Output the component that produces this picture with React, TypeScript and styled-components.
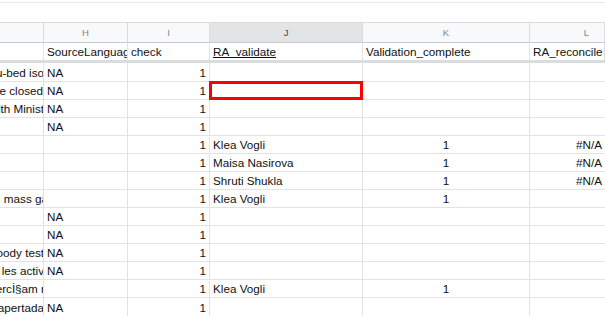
import React from "react"
import styled, { createGlobalStyle } from "styled-components"

const GlobalStyle = createGlobalStyle`
  html, body {
    margin: 0;
    padding: 0;
    background: #fff;
  }
  body {
    font-family: "Liberation Sans", Arial, sans-serif;
    overflow: hidden;
  }
`

const COLS = "44px 84px 82px 153px 167px 75px"

const Page = styled.div`
  width: 605px;
  height: 316px;
  overflow: hidden;
  background: #fff;
`

const TopBar = styled.div`
  height: 22px;
  box-sizing: border-box;
  padding-top: 2px;
  &::before {
    content: "";
    display: block;
    height: 1px;
    background: #e6e7e8;
  }
`

const Row = styled.div<{ $h: number }>`
  display: grid;
  grid-template-columns: ${COLS};
  height: ${(p) => p.$h}px;
`

const LetterCell = styled.div<{ $active?: boolean; $edge?: number }>`
  box-sizing: border-box;
  border-top: 1px solid #dadcdf;
  border-bottom: 1px solid #c8cacd;
  border-right: 1px solid #dadcdf;
  background: ${(p) => (p.$active ? "#e3e4e6" : "#f8f9fa")};
  color: ${(p) => (p.$active ? "#3c4043" : "#80868b")};
  font-size: 9.5px;
  display: flex;
  align-items: center;
  justify-content: ${(p) => (p.$edge ? "flex-end" : "center")};
  padding-right: ${(p) => p.$edge || 0}px;
`

const Freeze = styled.div`
  height: 3px;
  background: #dadce0;
`

const Cell = styled.div<{
  $align?: "left" | "right" | "center"
  $underline?: boolean
  $head?: boolean
  $selected?: boolean
}>`
  position: relative;
  box-sizing: border-box;
  border-right: 1px solid #e2e3e3;
  border-bottom: ${(p) => (p.$head ? "none" : "1px solid #e2e3e3")};
  font-size: 11.7px;
  color: #111;
  white-space: nowrap;
  overflow: hidden;
  display: flex;
  align-items: center;
  padding: 0 3px;
  justify-content: ${(p) =>
    p.$align === "right"
      ? "flex-end"
      : p.$align === "center"
      ? "center"
      : "flex-start"};
  text-decoration: ${(p) => (p.$underline ? "underline" : "none")};
  text-underline-offset: 1px;

  &:last-child {
    border-right: ${(p) => (p.$head ? "1px solid #dadcdf" : "none")};
  }

  ${(p) =>
    p.$selected &&
    `
    overflow: visible;
    &::after {
      content: "";
      position: absolute;
      left: -1px;
      top: -1px;
      right: -1px;
      bottom: -1px;
      border: 3px solid #ff0000;
      pointer-events: none;
    }
  `}
`

const Tail = styled.span<{ $over?: number }>`
  margin-right: ${(p) => -(p.$over || 0)}px;
`

const LeadCell = styled(Cell)`
  justify-content: flex-end;
  padding: 0;
`

type DataRow = {
  g?: string
  gOver?: number
  h?: string
  i?: string
  j?: string
  k?: string
  l?: string
  sel?: boolean
}

const rows: DataRow[] = [
  { g: "Covu-bed iso", gOver: 1, h: "NA", i: "1" },
  { g: "are closed", h: "NA", i: "1", sel: true },
  { g: "Health Minist", gOver: 1, h: "NA", i: "1" },
  { h: "NA", i: "1" },
  { i: "1", j: "Klea Vogli", k: "1", l: "#N/A" },
  { i: "1", j: "Maisa Nasirova", k: "1", l: "#N/A" },
  { i: "1", j: "Shruti Shukla", k: "1", l: "#N/A" },
  { g: " mass ga", gOver: 5, i: "1", j: "Klea Vogli", k: "1" },
  { h: "NA", i: "1" },
  { h: "NA", i: "1" },
  { g: "antioody test", gOver: 1, h: "NA", i: "1" },
  { g: "vities les activ", gOver: 1, h: "NA", i: "1" },
  { g: "Exercİ§am r", gOver: 2, i: "1", j: "Klea Vogli", k: "1" },
  { g: "está apertada", gOver: 1, h: "NA", i: "1" },
]

const heights = [19, 18, 18, 18, 18, 18, 18, 18, 18, 18, 18, 18, 18, 19]

export default function App() {
  return (
    <Page>
      <GlobalStyle />
      <TopBar />
      <Row $h={21}>
        <LetterCell />
        <LetterCell>H</LetterCell>
        <LetterCell>I</LetterCell>
        <LetterCell $active>J</LetterCell>
        <LetterCell>K</LetterCell>
        <LetterCell $edge={15}>L</LetterCell>
      </Row>
      <Row $h={17}>
        <Cell $head />
        <Cell $head>SourceLanguage</Cell>
        <Cell $head>check</Cell>
        <Cell $head $underline>
          RA_validate
        </Cell>
        <Cell $head>Validation_complete</Cell>
        <Cell $head>RA_reconcile</Cell>
      </Row>
      <Freeze />
      {rows.map((r, idx) => (
        <Row key={idx} $h={heights[idx]}>
          <LeadCell>
            <Tail $over={r.gOver}>{r.g}</Tail>
          </LeadCell>
          <Cell>{r.h}</Cell>
          <Cell $align="right">{r.i}</Cell>
          <Cell $selected={r.sel}>{r.j}</Cell>
          <Cell $align="center">{r.k}</Cell>
          <Cell $align="right">{r.l}</Cell>
        </Row>
      ))}
    </Page>
  )
}
